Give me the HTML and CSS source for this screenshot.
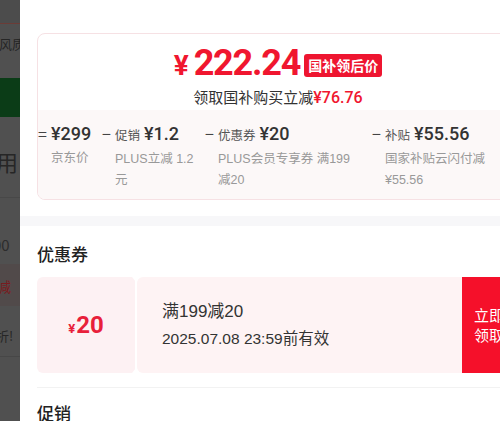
FILE: index.html
```html
<!DOCTYPE html>
<html>
<head>
    <title>国补价格详情</title>
    <link rel="stylesheet" href="styles.css">
</head>
<body>
<div class="page">
    <!-- dimmed product page behind the sheet -->
    <div class="backdrop">
        <div class="bd-top"></div>
        <div class="bd-row bd-small">风质</div>
        <div class="bd-green"></div>
        <div class="bd-row bd-big">用</div>
        <div class="bd-row bd-num">00</div>
        <div class="bd-row bd-red">减</div>
        <div class="bd-row bd-small bd-line">折!</div>
        <div class="bd-row"></div>
    </div>

    <div class="sheet">
        <section class="price-card">
            <div class="price-top">
                <div class="price-line">
                    <span class="price"><span class="yen">¥</span>222.24</span>
                    <span class="badge">国补领后价</span>
                </div>
                <div class="price-sub">领取国补购买立减<span class="red">¥76.76</span></div>
            </div>
            <div class="price-break">
                <div class="item item-1">
                    <span class="op">=</span>
                    <div class="item-body">
                        <div class="item-main"><span class="amount">¥299</span></div>
                        <div class="item-note">京东价</div>
                    </div>
                </div>
                <div class="item item-2">
                    <span class="op">−</span>
                    <div class="item-body">
                        <div class="item-main"><span class="label">促销</span><span class="amount">¥1.2</span></div>
                        <div class="item-note">PLUS立减 1.2元</div>
                    </div>
                </div>
                <div class="item item-3">
                    <span class="op">−</span>
                    <div class="item-body">
                        <div class="item-main"><span class="label">优惠券</span><span class="amount">¥20</span></div>
                        <div class="item-note">PLUS会员专享券 满199减20</div>
                    </div>
                </div>
                <div class="item item-4">
                    <span class="op">−</span>
                    <div class="item-body">
                        <div class="item-main"><span class="label">补贴</span><span class="amount">¥55.56</span></div>
                        <div class="item-note">国家补贴云闪付减¥55.56</div>
                    </div>
                </div>
            </div>
        </section>

        <div class="gap-band"></div>

        <section class="coupons">
            <h3 class="section-title">优惠券</h3>
            <div class="coupon">
                <div class="coupon-value"><span class="c-yen">¥</span>20</div>
                <div class="coupon-info">
                    <div class="coupon-name">满199减20</div>
                    <div class="coupon-date">2025.07.08 23:59前有效</div>
                </div>
                <button class="coupon-btn">立即<br>领取</button>
            </div>
        </section>

        <section class="promo">
            <h3 class="section-title">促销</h3>
        </section>
    </div>
</div>
</body>
</html>
```

FILE: styles.css
```css
body {
    margin: 0;
    padding: 0;
    overflow: hidden;
    background-color: #4f4f4f;
    font-family: "Noto Sans CJK SC", "Noto Sans", sans-serif;
    color: #222;
}

.page {
    display: flex;
    width: 536px;
    height: 421px;
}

/* ---- backdrop ---- */
.backdrop {
    width: 20px;
    flex: none;
    overflow: hidden;
    background-color: #505050;
}

.bd-top {
    height: 23px;
    background-color: #4c4c4c;
    border-bottom: 1px solid #6b3c37;
}

.bd-row {
    white-space: nowrap;
    color: #262626;
    overflow: hidden;
}

.bd-small {
    height: 54px;
    font-size: 13px;
    line-height: 40px;
    margin-left: -1px;
}

.bd-green {
    height: 39px;
    background-color: #0b3c17;
}

.bd-big {
    height: 80px;
    font-size: 22px;
    line-height: 88px;
    margin-left: -4px;
    border-bottom: 1px solid #484848;
}

.bd-num {
    height: 66px;
    font-size: 15px;
    line-height: 94px;
    margin-left: -7px;
    color: #2c2c2c;
}

.bd-red {
    height: 42px;
    font-size: 14px;
    line-height: 44px;
    margin-left: -3px;
    color: #7a1a1e;
    background-color: #514a4a;
}

.bd-line {
    height: 50px;
    line-height: 60px;
    margin-left: -4px;
    border-bottom: 1px solid #474747;
}

/* ---- sheet ---- */
.sheet {
    width: 482px;
    flex: none;
    padding: 33px 17px 0;
    background-color: #fff;
}

.price-card {
    border: 1px solid #f6e1e4;
    border-radius: 8px;
    overflow: hidden;
}

.price-top {
    text-align: center;
    padding: 10px 0 0;
    height: 66px;
}

.price-line {
    display: flex;
    justify-content: center;
    align-items: center;
    gap: 4px;
    height: 40px;
}

.price {
    font-family: Roboto, "Noto Sans", sans-serif;
    font-weight: 700;
    font-size: 36px;
    letter-spacing: -1.2px;
    color: #f0162f;
    line-height: 40px;
}

.yen {
    font-size: 28px;
    margin-right: 6px;
}

.badge {
    background-color: #ee1530;
    color: #fff;
    font-size: 14px;
    font-weight: 700;
    line-height: 23px;
    padding: 0 4px;
    border-radius: 3px;
    margin-top: 2px;
}

.price-sub {
    font-size: 15px;
    color: #333;
    line-height: 22px;
    margin-top: 2px;
}

.red {
    color: #f0162f;
    font-family: Roboto, "Noto Sans", sans-serif;
    font-size: 16px;
    font-weight: 500;
}

.price-break {
    display: flex;
    background-color: #fcf8f8;
    padding: 10px 0 12px;
    height: 67px;
}

.item {
    display: flex;
    flex: none;
}

.item-1 { width: 64px; }
.item-2 { width: 103px; }
.item-3 { width: 167px; }
.item-4 { width: 135px; }

.op {
    font-size: 16px;
    line-height: 26px;
    color: #444;
    width: 13px;
    flex: none;
}

.item-body {
    flex: 1;
    padding-right: 6px;
}

.item-3 .item-body {
    padding-right: 18px;
}

.item-main {
    line-height: 26px;
    white-space: nowrap;
}

.label {
    font-size: 12.5px;
    color: #555;
    margin-right: 4px;
}

.amount {
    font-family: Roboto, "Noto Sans", sans-serif;
    font-size: 18px;
    font-weight: 500;
    color: #333;
}

.item-note {
    font-family: "Liberation Sans", "Noto Sans CJK SC", sans-serif;
    font-size: 12.5px;
    line-height: 21px;
    color: #999;
    margin-top: 1px;
}

.gap-band {
    height: 10px;
    margin: 16px -17px 0;
    background-color: #f7f7f9;
}

.section-title {
    margin: 0;
    font-size: 17px;
    font-weight: 500;
    line-height: 22px;
    color: #222;
}

.coupons {
    padding: 17px 0 14px;
    border-bottom: 1px solid #f2f2f2;
}

.coupon {
    display: flex;
    height: 96px;
    margin-top: 12px;
}

.coupon-value {
    width: 98px;
    flex: none;
    background-color: #fdf1f3;
    border-radius: 6px 0 0 6px;
    text-align: center;
    line-height: 96px;
    color: #e8203a;
    font-family: Roboto, "Noto Sans", sans-serif;
    font-weight: 700;
    font-size: 24px;
}

.c-yen {
    font-size: 13px;
    margin-right: 1px;
}

.coupon-info {
    position: relative;
    flex: 1;
    margin-left: 2px;
    background-color: #fef3f4;
    border-radius: 6px 0 0 6px;
    padding: 23px 0 0 25px;
    font-family: "Liberation Sans", "Noto Sans CJK SC", sans-serif;
}

/* ticket notches */
.coupon-info::before,
.coupon-info::after {
    content: "";
    position: absolute;
    left: -5px;
    border-left: 4px solid transparent;
    border-right: 4px solid transparent;
}

.coupon-info::before {
    top: 0;
    border-top: 5px solid #fff;
}

.coupon-info::after {
    bottom: 0;
    border-bottom: 5px solid #fff;
}

.coupon-name {
    font-size: 17px;
    line-height: 24px;
    color: #333;
}

.coupon-date {
    font-size: 15.5px;
    line-height: 24px;
    color: #333;
    margin-top: 3px;
}

.coupon-btn {
    width: 57px;
    flex: none;
    border: none;
    background-color: #f5102a;
    color: #fff;
    font-family: "Noto Sans CJK SC", sans-serif;
    font-size: 15px;
    line-height: 20px;
    text-align: left;
    padding: 0 0 0 12px;
}

.promo {
    padding-top: 14px;
}
```
